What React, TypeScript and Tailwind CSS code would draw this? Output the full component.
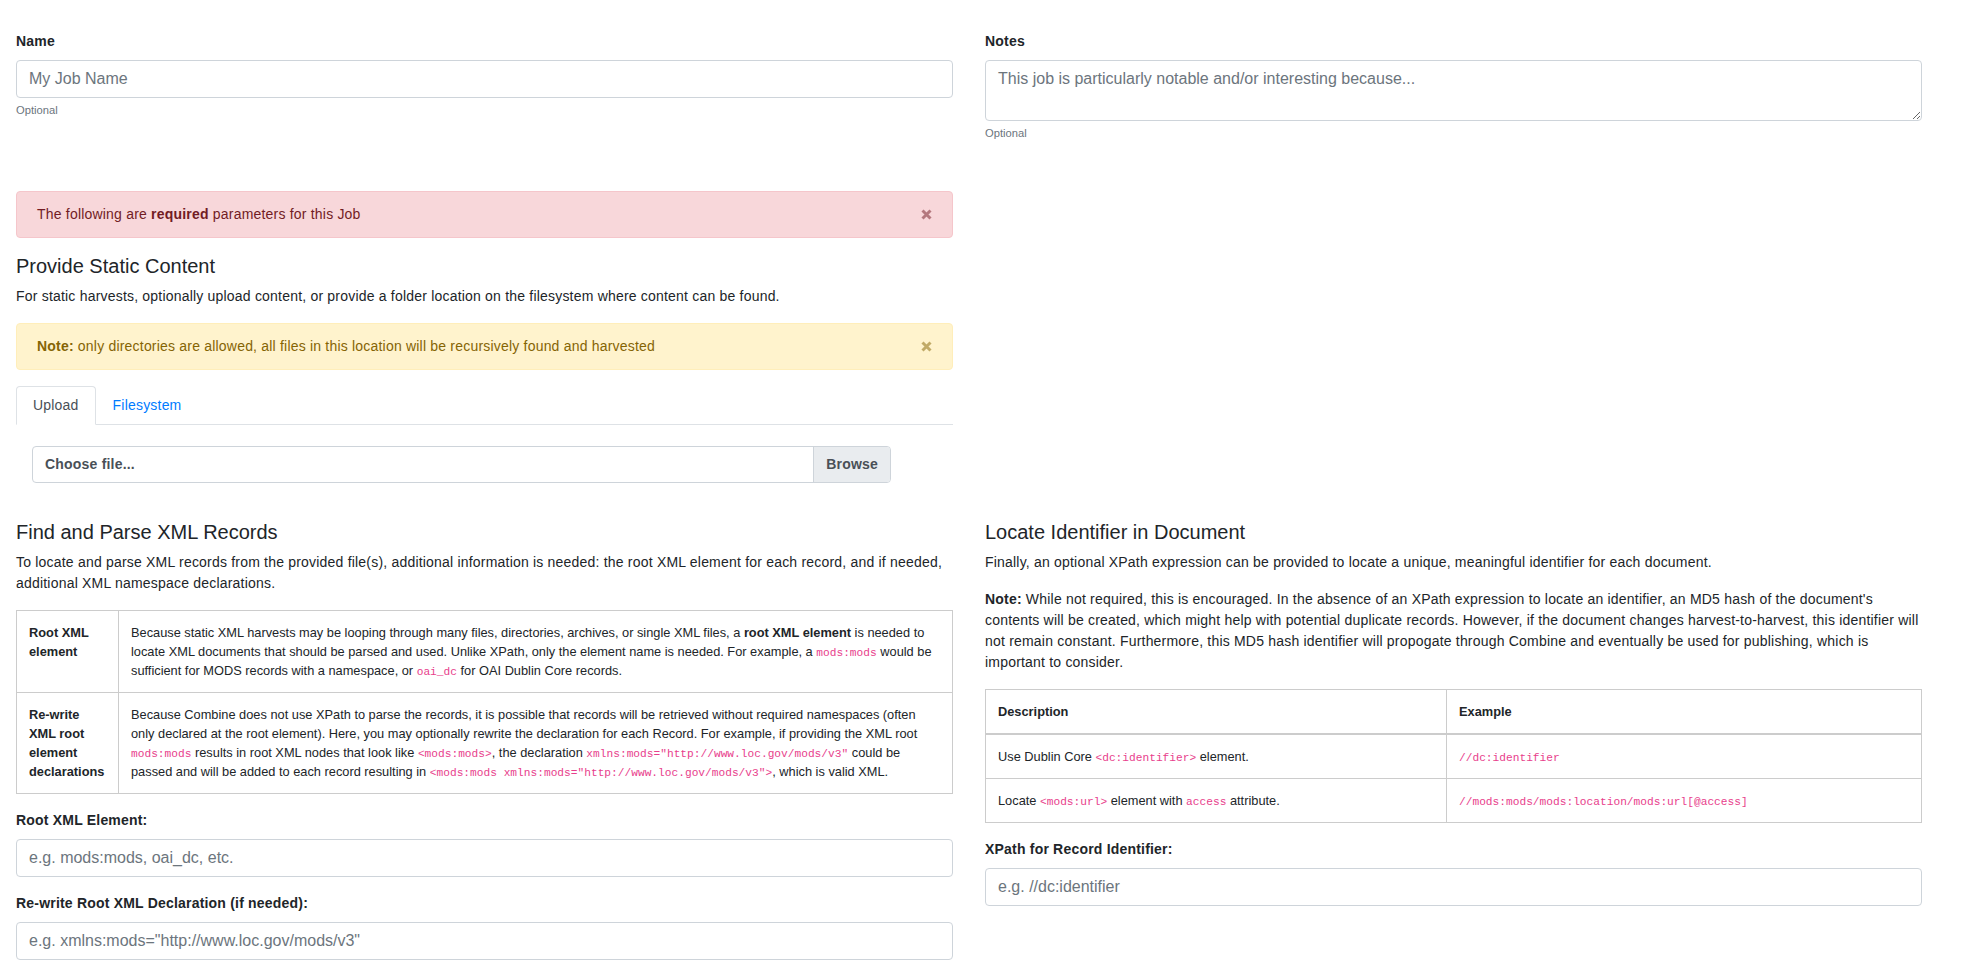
import React from "react";

const CloseX = () => (
  <svg width="11" height="11" viewBox="0 0 11 11" className="shrink-0 opacity-50">
    <path d="M1.5 1.5L9.5 9.5M9.5 1.5L1.5 9.5" stroke="currentColor" strokeWidth="3" />
  </svg>
);

function Code({ children }: { children: React.ReactNode }) {
  return (
    <code className="font-['Liberation_Mono','DejaVu_Sans_Mono',monospace] text-[87.5%] leading-none tracking-normal text-[#e83e8c]">
      {children}
    </code>
  );
}

function Field({ label, placeholder }: { label: string; placeholder: string }) {
  return (
    <div className="mb-4">
      <label className="mb-2 block font-bold">{label}</label>
      <input
        className="block h-[38px] w-full rounded-[4px] border border-[#ced4da] px-3 text-[16px] tracking-normal text-[#495057] outline-none placeholder:text-[#6c757d]"
        placeholder={placeholder}
      />
    </div>
  );
}

export default function App() {
  return (
    <div className="min-h-screen bg-white pt-[31px] pl-4 font-['Liberation_Sans',Arial,sans-serif] text-[14px] leading-[1.5] tracking-[0.2px] text-[#212529]">
      <div className="grid grid-cols-[937px_937px] gap-x-8">
        {/* job name + notes */}
        <div>
          <label className="mb-2 block font-bold">Name</label>
          <input
            className="block h-[38px] w-full rounded-[4px] border border-[#ced4da] px-3 text-[16px] tracking-normal text-[#495057] outline-none placeholder:text-[#6c757d]"
            placeholder="My Job Name"
          />
          <small className="mt-1 block text-[11.2px] tracking-normal text-[#6c757d]">Optional</small>
        </div>
        <div>
          <label className="mb-2 block font-bold">Notes</label>
          <textarea
            rows={2}
            className="block h-[61px] w-full rounded-[4px] border border-[#ced4da] px-3 py-1.5 text-[16px] leading-[1.5] tracking-normal text-[#495057] outline-none placeholder:text-[#6c757d]"
            placeholder="This job is particularly notable and/or interesting because..."
          />
          <small className="mt-1 block text-[11.2px] tracking-normal text-[#6c757d]">Optional</small>
        </div>

        {/* static content */}
        <div className="mt-[49px]">
          <div className="mb-4 flex items-center justify-between rounded-[4px] border border-[#f5c6cb] bg-[#f8d7da] px-5 py-3 text-[#721c24]">
            <span>
              The following are <b>required</b> parameters for this Job
            </span>
            <CloseX />
          </div>

          <h5 className="mb-2 text-[20px] leading-[1.2] tracking-normal">Provide Static Content</h5>
          <p className="mb-4">
            For static harvests, optionally upload content, or provide a folder location on the filesystem where content can be found.
          </p>

          <div className="mb-4 flex items-center justify-between rounded-[4px] border border-[#ffeeba] bg-[#fff3cd] px-5 py-3 text-[#856404]">
            <span>
              <b>Note:</b> only directories are allowed, all files in this location will be recursively found and harvested
            </span>
            <CloseX />
          </div>

          <div className="flex border-b border-[#dee2e6]">
            <div className="-mb-px rounded-t-[4px] border border-[#dee2e6] border-b-white bg-white px-4 py-2 text-[#495057]">
              Upload
            </div>
            <div className="-mb-px border border-transparent px-4 py-2 text-[#007bff]">Filesystem</div>
          </div>

          <div className="mt-[21px] ml-4 flex h-[37px] w-[859px] overflow-hidden rounded-[4px] border border-[#ced4da] font-bold text-[#495057]">
            <div className="flex flex-1 items-center px-3">Choose file...</div>
            <div className="flex items-center border-l border-[#ced4da] bg-[#e9ecef] px-3">Browse</div>
          </div>
        </div>
        <div />

        {/* find and parse */}
        <div className="mt-[37px]">
          <h5 className="mb-2 text-[20px] leading-[1.2] tracking-normal">Find and Parse XML Records</h5>
          <p className="mb-4">
            To locate and parse XML records from the provided file(s), additional information is needed: the root XML element for each record, and if needed, additional XML namespace declarations.
          </p>

          <table className="mb-4 w-full table-fixed border-collapse text-[12.8px] leading-[19px] tracking-normal">
            <colgroup>
              <col className="w-[102px]" />
              <col />
            </colgroup>
            <tbody>
              <tr>
                <th className="border border-[#cccccc] p-3 text-left align-top font-bold">Root XML element</th>
                <td className="border border-[#cccccc] p-3 align-top">
                  Because static XML harvests may be looping through many files, directories, archives, or single XML files, a{" "}
                  <b>root XML element</b> is needed to locate XML documents that should be parsed and used. Unlike XPath, only the element
                  name is needed. For example, a <Code>mods:mods</Code> would be sufficient for MODS records with a namespace, or{" "}
                  <Code>oai_dc</Code> for OAI Dublin Core records.
                </td>
              </tr>
              <tr>
                <th className="border border-[#cccccc] p-3 text-left align-top font-bold">Re-write XML root element declarations</th>
                <td className="border border-[#cccccc] p-3 align-top">
                  Because Combine does not use XPath to parse the records, it is possible that records will be retrieved without required
                  namespaces (often only declared at the root element). Here, you may optionally rewrite the declaration for each Record. For
                  example, if providing the XML root <Code>mods:mods</Code> results in root XML nodes that look like{" "}
                  <Code>&lt;mods:mods&gt;</Code>, the declaration <Code>xmlns:mods="http://www.loc.gov/mods/v3"</Code> could be passed and
                  will be added to each record resulting in <Code>&lt;mods:mods xmlns:mods="http://www.loc.gov/mods/v3"&gt;</Code>, which is
                  valid XML.
                </td>
              </tr>
            </tbody>
          </table>

          <Field label="Root XML Element:" placeholder="e.g. mods:mods, oai_dc, etc." />
          <Field label="Re-write Root XML Declaration (if needed):" placeholder='e.g. xmlns:mods="http://www.loc.gov/mods/v3"' />
        </div>

        {/* identifier */}
        <div className="mt-[37px]">
          <h5 className="mb-2 text-[20px] leading-[1.2] tracking-normal">Locate Identifier in Document</h5>
          <p className="mb-4">
            Finally, an optional XPath expression can be provided to locate a unique, meaningful identifier for each document.
          </p>
          <p className="mb-4">
            <b>Note:</b> While not required, this is encouraged. In the absence of an XPath expression to locate an identifier, an MD5 hash
            of the document's
            <br />
            contents will be created, which might help with potential duplicate records. However, if the document changes
            harvest-to-harvest, this identifier will
            <br />
            not remain constant. Furthermore, this MD5 hash identifier will propogate through Combine and eventually be used for
            publishing, which is
            <br />
            important to consider.
          </p>

          <table className="mb-4 w-full table-fixed border-collapse text-[12.8px] leading-[19px] tracking-normal">
            <colgroup>
              <col className="w-[461px]" />
              <col />
            </colgroup>
            <thead>
              <tr>
                <th className="border border-b-2 border-[#cccccc] p-3 text-left align-bottom font-bold">Description</th>
                <th className="border border-b-2 border-[#cccccc] p-3 text-left align-bottom font-bold">Example</th>
              </tr>
            </thead>
            <tbody>
              <tr>
                <td className="border border-[#cccccc] p-3 align-top">
                  Use Dublin Core <Code>&lt;dc:identifier&gt;</Code> element.
                </td>
                <td className="border border-[#cccccc] p-3 align-top">
                  <Code>//dc:identifier</Code>
                </td>
              </tr>
              <tr>
                <td className="border border-[#cccccc] p-3 align-top">
                  Locate <Code>&lt;mods:url&gt;</Code> element with <Code>access</Code> attribute.
                </td>
                <td className="border border-[#cccccc] p-3 align-top">
                  <Code>//mods:mods/mods:location/mods:url[@access]</Code>
                </td>
              </tr>
            </tbody>
          </table>

          <Field label="XPath for Record Identifier:" placeholder="e.g. //dc:identifier" />
        </div>
      </div>
    </div>
  );
}
